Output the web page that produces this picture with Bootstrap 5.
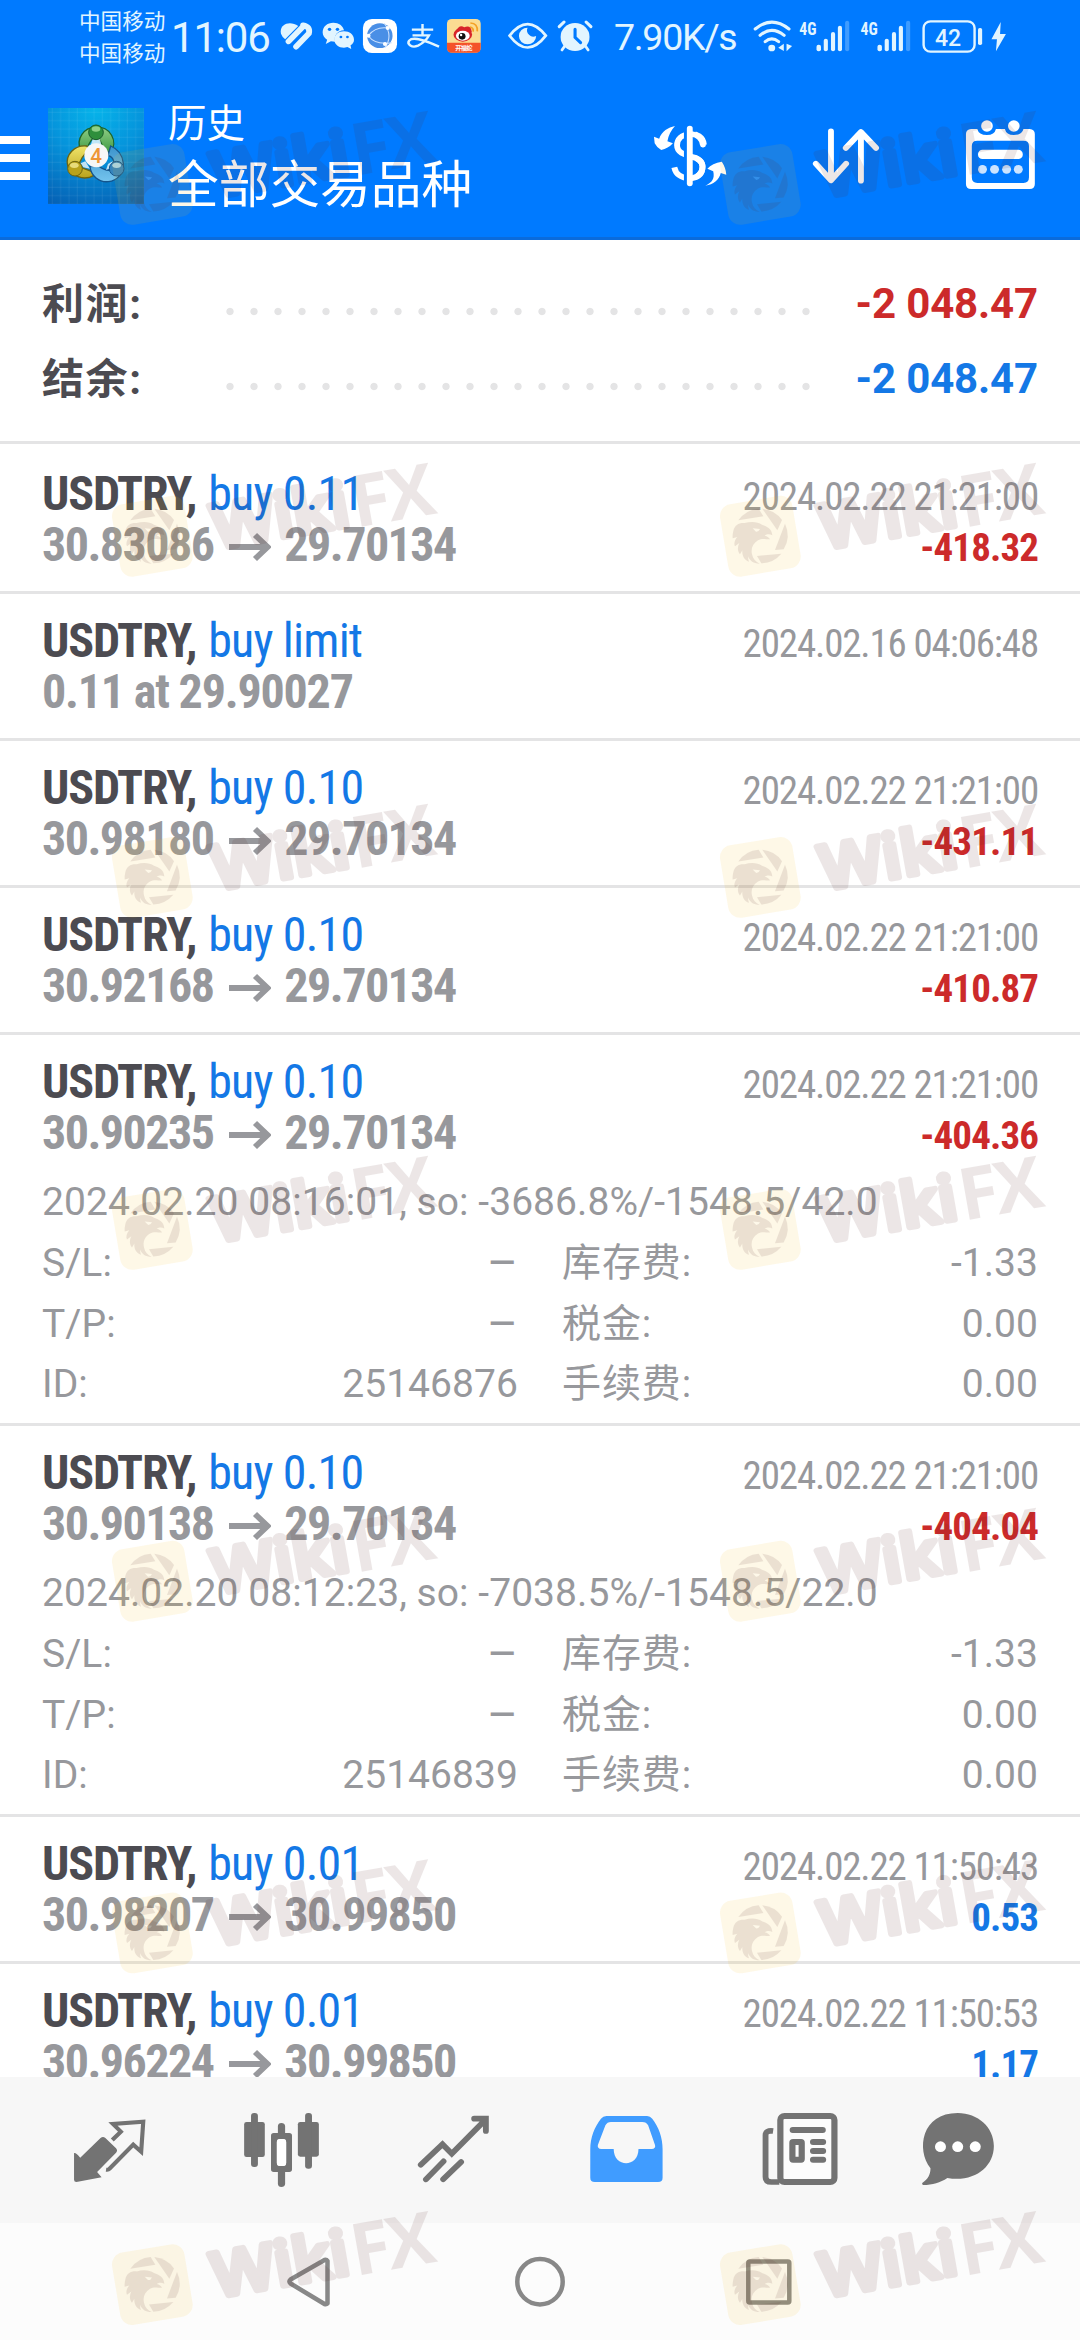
<!DOCTYPE html>
<html lang="zh-CN">
<head>
<meta charset="utf-8">
<meta name="viewport" content="width=device-width, initial-scale=1">
<title>历史</title>
<link href="https://cdn.jsdelivr.net/npm/bootstrap@5.3.0/dist/css/bootstrap.min.css" rel="stylesheet">
<style>
  body{width:1080px;height:2340px;overflow:hidden;background:#fff;font-family:Roboto,"Noto Sans CJK SC",sans-serif;color:#97989c}
  svg{display:block;flex:none}
  .screen{width:1080px;height:2340px}
  .topbar{height:240px;background:#007aff;border-bottom:3px solid #0a6bdc}
  .statusbar{height:75px;color:#e2f5ff;padding-left:79px}
  .carrier{font-size:21.6px;line-height:32px;width:92px}
  .clock{font-size:42px;letter-spacing:-1.2px;width:109px;line-height:75px}
  .speed{font-size:37.5px;letter-spacing:-1.3px;width:136px;line-height:75px;margin-left:2px}
  .titlebar{height:162px;color:#fff}
  .titles{padding-top:10px}
  .t-one{font-size:38.5px;line-height:50px}
  .t-two{font-size:50.7px;line-height:74px}
  .summary{padding:26px 42px 25px;border-bottom:3px solid #e4e4e5;font-size:42px;line-height:75px}
  .sum-name{width:176px;height:75px;line-height:77px;font-weight:700;color:#4c4b51;letter-spacing:1.6px}
  .dots{width:600px;height:75px;background:radial-gradient(circle at 12px 45.5px,#e4e4e5 3.2px,transparent 4.1px) 0 0/24px 75px}
  .sum-val{font-weight:700;letter-spacing:-.15px}
  .neg{color:#cc2a2a}
  .pos{color:#1478e6}
  .deal{padding:21px 42px;border-bottom:3px solid #e4e4e5;font-family:"Roboto Condensed",Roboto,"Noto Sans CJK SC",sans-serif;white-space:nowrap}
  .deal.first{padding-top:24px}
  .deal.open{padding-bottom:8px}
  .line{height:51px}
  .sym{font-size:48px;line-height:51px;font-weight:700;color:#4c4b51;letter-spacing:-1.15px}
  .side{font-weight:400;color:#1478e6;font-size:48px;letter-spacing:-.8px;margin-left:2px}
  .price{font-size:48px;line-height:51px;font-weight:700;letter-spacing:-1.55px}
  .price.plain{letter-spacing:-1.2px}
  .arrow{display:inline-block;margin:0 13px 0 16px;vertical-align:-1px}
  .stamp{font-size:39px;line-height:40px;letter-spacing:-1.15px}
  .amount{font-size:39px;line-height:40px;font-weight:700;letter-spacing:-.9px}
  .details{padding-top:14px;font-family:Roboto,"Noto Sans CJK SC",sans-serif;font-size:39px;line-height:60.75px;letter-spacing:.06px}
  .details .pair{width:476px;height:60.75px}
  .fee{letter-spacing:.9px}
  .dash{font-size:47px}
  .deals{height:1633px;overflow:hidden}
  .tabs{height:146px;background:#f7f7f7;padding-left:24px;color:#737373}
  .sysnav{height:117px;background:#fcfcfc}
  .marks{left:0;top:0;pointer-events:none}
</style>
</head>
<body>
<div class="screen position-relative d-flex flex-column">
  <header class="topbar">
    <div class="statusbar d-flex align-items-center">
      <div class="carrier">中国移动<br>中国移动</div>
      <div class="clock">11:06</div>
      <svg width="332" height="75" viewBox="280 0 332 75">
        <g transform="scale(.34435 .33333)" fill="#e2f5ff">
          <path d="M816 101C810 72 842 60 866 78L828 118Q819 110 816 101Z"/>
          <path d="M838 124L880 80M860 140L897 100Q902 80 880 76" fill="none" stroke="#e2f5ff" stroke-width="17" stroke-linecap="round"/>
          <path d="M968 68C950 68 937 80 937 97C937 107 942 114 950 119L946 132L961 124L973 125C969 107 980 92 999 91C996 77 984 68 968 68Z"/>
          <path d="M999 94C983 94 971 104 971 119C971 133 984 143 999 143L1009 141L1020 147L1018 136C1025 131 1028 126 1028 119C1028 104 1015 94 999 94Z"/>
          <g fill="#007aff"><circle cx="957" cy="88" r="5"/><circle cx="980" cy="88" r="5"/><circle cx="990" cy="111" r="4"/><circle cx="1009" cy="111" r="4"/></g>
          <rect x="1054" y="57" width="99" height="102" rx="26" fill="#fff"/>
          <circle cx="1103" cy="107" r="37" fill="#4a8fe6"/>
          <path d="M1116 70Q1142 108 1118 143M1070 106Q1092 78 1128 84M1070 108Q1090 136 1138 128" fill="none" stroke="#cfe3ff" stroke-width="3"/>
          <g fill="#fff"><circle cx="1070" cy="107" r="6"/><circle cx="1126" cy="84" r="6"/><circle cx="1118" cy="132" r="6"/></g>
          <path d="M1196 89H1258M1227 72V106M1198 106H1246Q1236 126 1214 137C1196 145 1181 133 1188 122C1200 108 1236 122 1275 140" fill="none" stroke="#e2f5ff" stroke-width="7"/>
          <rect x="1298" y="57" width="98" height="101" rx="14" fill="#fbdc92"/>
          <path d="M1298 128H1396V144Q1396 158 1382 158H1312Q1298 158 1298 144Z" fill="#f4532a"/>
          <ellipse cx="1344" cy="104" rx="27" ry="21" fill="#d8242a"/><path d="M1322 96Q1334 72 1348 82Q1368 74 1370 96Z" fill="#d8242a"/>
          <ellipse cx="1344" cy="107" rx="20" ry="15" fill="#fff"/><circle cx="1342" cy="109" r="10" fill="#111"/><circle cx="1339" cy="105" r="3.5" fill="#fff"/>
          <path d="M1365 81Q1376 84 1374 95M1366 69Q1388 70 1386 94" fill="none" stroke="#f4a126" stroke-width="5"/>
          <text x="1347" y="150" font-size="18" font-weight="700" fill="#fff" text-anchor="middle" textLength="50">开福蛇</text>
          <path d="M1480 107Q1532 38 1585 107Q1532 178 1480 107Z" fill="none" stroke="#e2f5ff" stroke-width="8"/>
          <path d="M1532 83A25 25 0 1 0 1557 108Q1545 114 1537 105Q1527 96 1532 83Z"/>
          <g transform="translate(1568 0)"><circle cx="102" cy="111" r="42"/><path d="M56 80L70 66M148 80L134 66" stroke="#e2f5ff" stroke-width="9" stroke-linecap="round"/><path d="M72 138L64 150M132 138L140 150" stroke="#e2f5ff" stroke-width="8" stroke-linecap="round"/><path d="M102 88V112L118 128" fill="none" stroke="#007aff" stroke-width="9" stroke-linecap="round"/></g>
        </g>
      </svg>
      <div class="speed">7.90K/s</div>
      <svg width="270" height="75" viewBox="750 0 270 75">
        <g transform="translate(540 0) scale(.34435 .33333)" fill="#e2f5ff">
          <path d="M625 87Q673 46 723 87M639 106Q673 76 709 106M654 125Q673 108 693 125" fill="none" stroke="#e2f5ff" stroke-width="9" stroke-linecap="round"/>
          <circle cx="673" cy="144" r="10"/><path d="M692 143L708 131V153ZM732 138L716 131V154Z"/>
          <text x="753" y="104" font-size="56" font-family="Roboto Condensed" font-weight="700" textLength="50" lengthAdjust="spacingAndGlyphs">4G</text>
          <text x="931" y="104" font-size="56" font-family="Roboto Condensed" font-weight="700" textLength="50" lengthAdjust="spacingAndGlyphs">4G</text>
          <g id="bars"><rect x="803" y="134" width="13" height="20" rx="6"/><rect x="824" y="116" width="12" height="38" rx="6"/><rect x="845" y="96" width="12" height="58" rx="6"/><rect x="865" y="77" width="12" height="77" rx="6"/><rect x="886" y="62" width="12" height="92" rx="6" opacity=".28"/></g>
          <use href="#bars" x="177"/>
          <rect x="1114" y="64" width="148" height="91" rx="20" fill="none" stroke="#e2f5ff" stroke-width="7"/><rect x="1272" y="84" width="12" height="51" rx="5"/>
          <text x="1147" y="137" font-size="74" font-family="Roboto" font-weight="500" textLength="76" lengthAdjust="spacingAndGlyphs">42</text>
          <path d="M1338 66L1311 118H1327L1324 154L1353 102H1336Z"/>
        </g>
      </svg>
    </div>
    <div class="titlebar d-flex align-items-center">
      <svg width="48" height="96" viewBox="0 108 48 96"><path d="M0 136H30V144H0ZM0 154H30V162H0ZM0 172H30V180H0Z" fill="#fff"/></svg>
      <svg width="96" height="96" viewBox="24 24 288 288">
        <defs>
          <radialGradient id="sky" cx=".5" cy="0" r="1.1"><stop offset="0" stop-color="#06b4ea"/><stop offset=".45" stop-color="#0594dc"/><stop offset="1" stop-color="#0560b4"/></radialGradient>
          <linearGradient id="gr" x1="0" y1="0" x2="0" y2="1"><stop offset="0" stop-color="#8fce86"/><stop offset="1" stop-color="#3f9a42"/></linearGradient>
          <linearGradient id="ye" x1="0" y1="0" x2="0" y2="1"><stop offset="0" stop-color="#f0e46a"/><stop offset="1" stop-color="#b9a31c"/></linearGradient>
          <linearGradient id="bl" x1="0" y1="0" x2="0" y2="1"><stop offset="0" stop-color="#3c93cb"/><stop offset="1" stop-color="#74c4ee"/></linearGradient>
          <pattern id="mesh" width="25" height="25" patternUnits="userSpaceOnUse"><path d="M0 12H25M12 0V25" stroke="#fff" stroke-opacity=".13" stroke-width="1.5"/></pattern>
        </defs>
        <rect x="24" y="24" width="288" height="288" fill="url(#sky)"/><rect x="24" y="24" width="288" height="288" fill="url(#mesh)"/>
        <path d="M168 82A48 48 0 0 1 212 158L190 150Q182 112 168 112Q152 112 140 150L122 150A48 48 0 0 1 168 82Z" fill="url(#gr)" stroke="#1e6428" stroke-width="4"/>
        <path d="M140 138L150 148Q120 172 116 200L160 216L162 226A52 48 0 1 1 140 138Z" fill="url(#ye)" stroke="#6d6410" stroke-width="4"/>
        <path d="M212 138Q246 152 250 190A48 48 0 0 1 150 200L176 198Q196 214 214 210L222 190Q222 172 204 166Z" fill="url(#bl)" stroke="#14548c" stroke-width="4"/>
        <path d="M158 118L168 110L180 118L184 136H152ZM122 190L136 184L150 206L130 202ZM204 192L218 184L214 204L198 210Z" fill="#fff" opacity=".75"/>
        <circle cx="168" cy="97" r="22" fill="#2f8f3c" stroke="#1a5c2b" stroke-width="3"/><ellipse cx="168" cy="87" rx="13" ry="8" fill="#8ed086"/>
        <circle cx="105" cy="206" r="22" fill="#b8a21b" stroke="#6d6410" stroke-width="3"/><ellipse cx="103" cy="196" rx="13" ry="8" fill="#e8dc7a"/>
        <circle cx="230" cy="206" r="22" fill="#3585bd" stroke="#14548c" stroke-width="3"/><ellipse cx="230" cy="196" rx="13" ry="8" fill="#a5d5ee"/>
        <circle cx="169" cy="166" r="36" fill="#f7f7f7"/>
        <text x="168" y="188" font-size="62" font-family="Roboto" font-weight="500" fill="#ee9637" text-anchor="middle">4</text>
      </svg>
      <div class="titles ms-4 flex-grow-1"><div class="t-one">历史</div><div class="t-two">全部交易品种</div></div>
      <svg width="440" height="100" viewBox="640 106 440 100">
        <g transform="translate(540 0) scale(.34435 .33333)" fill="#fff">
          <path d="M476 434C474 410 454 400 435 402C410 404 398 418 398 436C398 458 420 464 435 468C460 474 472 486 472 500C472 522 455 534 435 535C410 535 394 522 390 502" fill="none" stroke="#fff" stroke-width="17"/>
          <path d="M435 386V550" stroke="#007aff" stroke-width="34"/><path d="M440 402C458 404 470 414 473 434M440 470C462 474 472 488 472 500C472 520 460 530 444 534" fill="none" stroke="#fff" stroke-width="17" stroke-linecap="round"/>
          <path d="M435 386V550" stroke="#fff" stroke-width="17" stroke-linecap="round"/>
          <path d="M392 378C372 382 354 394 346 416L331 410L333 430Q340 444 352 450Q372 446 386 430L370 424Q374 398 392 378Z"/>
          <path d="M480 557C500 548 508 536 503 514L486 506Q500 490 528 485Q540 504 541 524L525 519C520 540 504 554 480 557Z"/>
          <path d="M845 394V540M801 491L845 541L889 491M932 542V396M888 444L932 396L976 444" fill="none" stroke="#fff" stroke-width="17" stroke-linecap="round" stroke-linejoin="round"/>
          <path fill-rule="evenodd" d="M1252 387H1270Q1274 405 1298 405Q1320 405 1324 387H1350Q1354 405 1376 405Q1400 405 1404 387H1422Q1437 388 1437 402V552Q1437 567 1422 567H1252Q1237 567 1237 552V402Q1237 388 1252 387ZM1270 422Q1254 422 1254 438V532Q1254 549 1270 549H1404Q1420 549 1420 532V438Q1420 422 1404 422Z"/>
          <circle cx="1298" cy="378" r="17"/><circle cx="1376" cy="378" r="17"/><rect x="1272" y="449" width="130" height="28" rx="13"/>
          <g opacity=".8"><circle cx="1285" cy="508" r="13"/><circle cx="1320" cy="508" r="13"/><circle cx="1355" cy="508" r="13"/><circle cx="1389" cy="508" r="13"/></g>
        </g>
      </svg>
    </div>
  </header>

  <main>
    <section class="summary">
      <div class="d-flex"><span class="sum-name">利润:</span><span class="dots"></span><span class="sum-val neg ms-auto">-2 048.47</span></div>
      <div class="d-flex"><span class="sum-name">结余:</span><span class="dots"></span><span class="sum-val pos ms-auto">-2 048.47</span></div>
    </section>
    <section class="deals">
      <article class="deal first">
        <div class="line d-flex justify-content-between align-items-baseline"><span class="sym">USDTRY, <span class="side">buy 0.11</span></span><span class="stamp">2024.02.22 21:21:00</span></div>
        <div class="line d-flex justify-content-between align-items-baseline"><span class="price">30.83086<svg class="arrow" width="42" height="30" viewBox="0 0 42 30"><path d="M0 15H39M26 3L38.500 15L26 27" fill="none" stroke="#97989c" stroke-width="5.800"/></svg>29.70134</span><span class="amount neg">-418.32</span></div>
      </article>
      <article class="deal">
        <div class="line d-flex justify-content-between align-items-baseline"><span class="sym">USDTRY, <span class="side">buy limit</span></span><span class="stamp">2024.02.16 04:06:48</span></div>
        <div class="line d-flex align-items-baseline"><span class="price plain">0.11 at 29.90027</span></div>
      </article>
      <article class="deal">
        <div class="line d-flex justify-content-between align-items-baseline"><span class="sym">USDTRY, <span class="side">buy 0.10</span></span><span class="stamp">2024.02.22 21:21:00</span></div>
        <div class="line d-flex justify-content-between align-items-baseline"><span class="price">30.98180<svg class="arrow" width="42" height="30" viewBox="0 0 42 30"><path d="M0 15H39M26 3L38.500 15L26 27" fill="none" stroke="#97989c" stroke-width="5.800"/></svg>29.70134</span><span class="amount neg">-431.11</span></div>
      </article>
      <article class="deal">
        <div class="line d-flex justify-content-between align-items-baseline"><span class="sym">USDTRY, <span class="side">buy 0.10</span></span><span class="stamp">2024.02.22 21:21:00</span></div>
        <div class="line d-flex justify-content-between align-items-baseline"><span class="price">30.92168<svg class="arrow" width="42" height="30" viewBox="0 0 42 30"><path d="M0 15H39M26 3L38.500 15L26 27" fill="none" stroke="#97989c" stroke-width="5.800"/></svg>29.70134</span><span class="amount neg">-410.87</span></div>
      </article>
      <article class="deal open">
        <div class="line d-flex justify-content-between align-items-baseline"><span class="sym">USDTRY, <span class="side">buy 0.10</span></span><span class="stamp">2024.02.22 21:21:00</span></div>
        <div class="line d-flex justify-content-between align-items-baseline"><span class="price">30.90235<svg class="arrow" width="42" height="30" viewBox="0 0 42 30"><path d="M0 15H39M26 3L38.500 15L26 27" fill="none" stroke="#97989c" stroke-width="5.800"/></svg>29.70134</span><span class="amount neg">-404.36</span></div>
        <div class="details">
          <div>2024.02.20 08:16:01, so: -3686.8%/-1548.5/42.0</div>
          <div class="d-flex justify-content-between"><div class="pair d-flex justify-content-between"><span>S/L:</span><span class="dash">–</span></div><div class="pair d-flex justify-content-between"><span class="fee">库存费:</span><span>-1.33</span></div></div>
          <div class="d-flex justify-content-between"><div class="pair d-flex justify-content-between"><span>T/P:</span><span class="dash">–</span></div><div class="pair d-flex justify-content-between"><span class="fee">税金:</span><span>0.00</span></div></div>
          <div class="d-flex justify-content-between"><div class="pair d-flex justify-content-between"><span>ID:</span><span>25146876</span></div><div class="pair d-flex justify-content-between"><span class="fee">手续费:</span><span>0.00</span></div></div>
        </div>
      </article>
      <article class="deal open">
        <div class="line d-flex justify-content-between align-items-baseline"><span class="sym">USDTRY, <span class="side">buy 0.10</span></span><span class="stamp">2024.02.22 21:21:00</span></div>
        <div class="line d-flex justify-content-between align-items-baseline"><span class="price">30.90138<svg class="arrow" width="42" height="30" viewBox="0 0 42 30"><path d="M0 15H39M26 3L38.500 15L26 27" fill="none" stroke="#97989c" stroke-width="5.800"/></svg>29.70134</span><span class="amount neg">-404.04</span></div>
        <div class="details">
          <div>2024.02.20 08:12:23, so: -7038.5%/-1548.5/22.0</div>
          <div class="d-flex justify-content-between"><div class="pair d-flex justify-content-between"><span>S/L:</span><span class="dash">–</span></div><div class="pair d-flex justify-content-between"><span class="fee">库存费:</span><span>-1.33</span></div></div>
          <div class="d-flex justify-content-between"><div class="pair d-flex justify-content-between"><span>T/P:</span><span class="dash">–</span></div><div class="pair d-flex justify-content-between"><span class="fee">税金:</span><span>0.00</span></div></div>
          <div class="d-flex justify-content-between"><div class="pair d-flex justify-content-between"><span>ID:</span><span>25146839</span></div><div class="pair d-flex justify-content-between"><span class="fee">手续费:</span><span>0.00</span></div></div>
        </div>
      </article>
      <article class="deal">
        <div class="line d-flex justify-content-between align-items-baseline"><span class="sym">USDTRY, <span class="side">buy 0.01</span></span><span class="stamp">2024.02.22 11:50:43</span></div>
        <div class="line d-flex justify-content-between align-items-baseline"><span class="price">30.98207<svg class="arrow" width="42" height="30" viewBox="0 0 42 30"><path d="M0 15H39M26 3L38.500 15L26 27" fill="none" stroke="#97989c" stroke-width="5.800"/></svg>30.99850</span><span class="amount pos">0.53</span></div>
      </article>
      <article class="deal">
        <div class="line d-flex justify-content-between align-items-baseline"><span class="sym">USDTRY, <span class="side">buy 0.01</span></span><span class="stamp">2024.02.22 11:50:53</span></div>
        <div class="line d-flex justify-content-between align-items-baseline"><span class="price">30.96224<svg class="arrow" width="42" height="30" viewBox="0 0 42 30"><path d="M0 15H39M26 3L38.500 15L26 27" fill="none" stroke="#97989c" stroke-width="5.800"/></svg>30.99850</span><span class="amount pos">1.17</span></div>
      </article>
    </section>
  </main>

  <nav class="tabs d-flex">
    <svg width="172" height="146" viewBox="24 2077 172 146"><g transform="translate(0 2060) scale(.34435 .33333)" fill="#737373">
      <path d="M292 234Q299 228 306 234L337 265Q343 272 337 278L282 336L295 352L222 366Q215 366 215 359V279Q222 278 233 293Z"/>
      <path d="M326 240L351 215L328 192L416 185L410 275L387 254L317 327Q315 330 308 329" fill="none" stroke="#737373" stroke-width="12" stroke-linejoin="miter"/></g></svg>
    <svg width="172" height="146" viewBox="196 2077 172 146"><g transform="translate(0 2060) scale(.34435 .33333)" fill="#737373">
      <rect x="709" y="186" width="60" height="105" rx="7"/><rect x="729" y="159" width="20" height="162" rx="9"/>
      <rect x="865" y="186" width="61" height="104" rx="7"/><rect x="886" y="159" width="20" height="167" rx="9"/>
      <path d="M807 225V198Q808 189 817 189Q827 189 828 198V225ZM807 330V372Q808 381 817 381Q827 381 828 372V330Z"/>
      <path fill-rule="evenodd" d="M795 219H840Q848 219 848 227V328Q848 336 840 336H795Q787 336 787 328V227Q787 219 795 219ZM813 237Q804 237 804 246V309Q804 318 813 318H822Q831 318 831 309V246Q831 237 822 237Z"/><rect x="804" y="237" width="27" height="81" rx="9" fill="#fff"/></g></svg>
    <svg width="172" height="146" viewBox="368 2077 172 146"><g transform="translate(0 2060) scale(.34435 .33333)" fill="none" stroke="#737373" stroke-width="17" stroke-linecap="round">
      <path d="M1222 314L1285 253L1312 281L1409 180M1377 176H1411V213"/><path d="M1237 358L1288 304M1287 358L1339 306"/></g></svg>
    <svg width="172" height="146" viewBox="540 2077 172 146"><g transform="translate(540 2060) scale(.34435 .33333)">
      <path fill="#409cff" fill-rule="evenodd" d="M193 168H311Q320 168 326 176C345 202 356 232 356 268V353Q356 366 343 366H159Q146 366 146 353V268C146 232 158 202 177 176Q183 168 193 168ZM206 186Q195 186 190 196L168 255Q166 266 178 267H214C214 324 286 324 286 267H324Q337 266 334 255L314 196Q309 186 297 186Z"/></g></svg>
    <svg width="172" height="146" viewBox="712 2077 172 146"><g transform="translate(540 2060) scale(.34435 .33333)" fill="#737373">
      <rect x="698" y="168" width="157" height="198" rx="12" fill="#fcfcfc" stroke="#737373" stroke-width="18"/>
      <path d="M677 213Q655 210 655 226V350Q655 366 672 366H695" fill="none" stroke="#737373" stroke-width="17"/>
      <rect x="725" y="201" width="105" height="18" rx="9"/><rect x="784" y="237" width="47" height="18" rx="9"/><rect x="784" y="264" width="47" height="18" rx="9"/><rect x="784" y="290" width="47" height="18" rx="9"/>
      <rect x="733" y="246" width="27" height="53" rx="2" fill="none" stroke="#737373" stroke-width="18"/></g></svg>
    <svg width="172" height="146" viewBox="884 2077 172 146"><g transform="translate(540 2060) scale(.34435 .33333)">
      <path fill="#737373" d="M1213 159C1272 159 1318 202 1318 258C1318 322 1260 368 1183 354C1162 368 1140 375 1113 375Q1108 374 1110 369C1126 358 1134 345 1134 325C1092 268 1108 159 1213 159Z"/>
      <g fill="#fff"><circle cx="1163" cy="260" r="16"/><circle cx="1213" cy="260" r="16"/><circle cx="1264" cy="260" r="16"/></g></g></svg>
  </nav>
  <div class="sysnav d-flex">
    <svg width="1080" height="117" viewBox="0 2223 1080 117" fill="none" stroke="#888" stroke-width="4.500" stroke-linejoin="round">
      <path d="M327.500 2261V2303.500Q326.500 2304.500 324.500 2304L290.500 2283.500Q288.500 2281.500 290.500 2279.500L324.500 2260Q326.500 2259.500 327.500 2261Z"/>
      <ellipse cx="540" cy="2281.700" rx="22.700" ry="22.700"/>
      <rect x="748.300" y="2261.500" width="41" height="41" rx="1.500"/>
    </svg>
  </div>

  <svg class="marks position-absolute" width="1080" height="2340" viewBox="0 0 1080 2340">
    <defs>
      <g id="wm">
        <rect x="3.700" y="37.300" width="73.300" height="73.300" rx="12" transform="rotate(-9.500 40.300 74)" fill="#f5be1e" opacity=".105"/>
        <g opacity=".11" fill="#5a2828" stroke="none">
          <g transform="translate(-40 -23.300) scale(.33333)">
            <path d="M175 244A82 82 0 0 1 236 209L250 232Z"/><path d="M247 209A82 82 0 0 1 306 243L292 274Z"/><path d="M315 254A82 82 0 0 1 311 331L285 333Z"/><path d="M304 344A82 82 0 0 1 244 373L231 351Z"/>
            <path d="M160 276C164 258 176 251 194 252C212 247 232 247 246 257C262 263 275 268 277 289C268 284 260 286 254 290C262 292 268 296 270 301C254 301 244 298 234 304C218 314 212 328 216 346C219 360 227 368 239 374C220 374 210 366 204 352Q204 362 207 368C192 362 186 350 187 334L180 346C172 336 172 324 178 312L165 322C161 314 164 302 172 294L158 298Q157 288 160 276Z"/>
            <path d="M218 268L240 270Q236 279 228 278Z" fill="#fff"/>
          </g>
          <g transform="translate(103.600 90) rotate(-10)" font-family="Open Sans">
            <text x="1" y="-3" font-size="62" font-weight="600" stroke="#5a2828" stroke-width="6" stroke-linejoin="round" textLength="138" lengthAdjust="spacingAndGlyphs">Wiki</text>
            <text x="142" y="0" font-size="72" font-weight="700">F</text>
            <text x="178" y="0" font-size="72" font-weight="700">X</text>
          </g>
        </g>
      </g>
    </defs>
    <use href="#wm" x="112" y="110.500"/><use href="#wm" x="720" y="110.500"/>
    <use href="#wm" x="112" y="462.300"/><use href="#wm" x="720" y="462.300"/>
    <use href="#wm" x="112" y="803.500"/><use href="#wm" x="720" y="803.500"/>
    <use href="#wm" x="112" y="1155.500"/><use href="#wm" x="720" y="1155.500"/>
    <use href="#wm" x="112" y="1507.300"/><use href="#wm" x="720" y="1507.300"/>
    <use href="#wm" x="112" y="1859"/><use href="#wm" x="720" y="1859"/>
    <use href="#wm" x="112" y="2210.700"/><use href="#wm" x="720" y="2210.700"/>
  </svg>
</div>
<script src="https://cdn.jsdelivr.net/npm/bootstrap@5.3.0/dist/js/bootstrap.bundle.min.js"></script>
</body>
</html>
